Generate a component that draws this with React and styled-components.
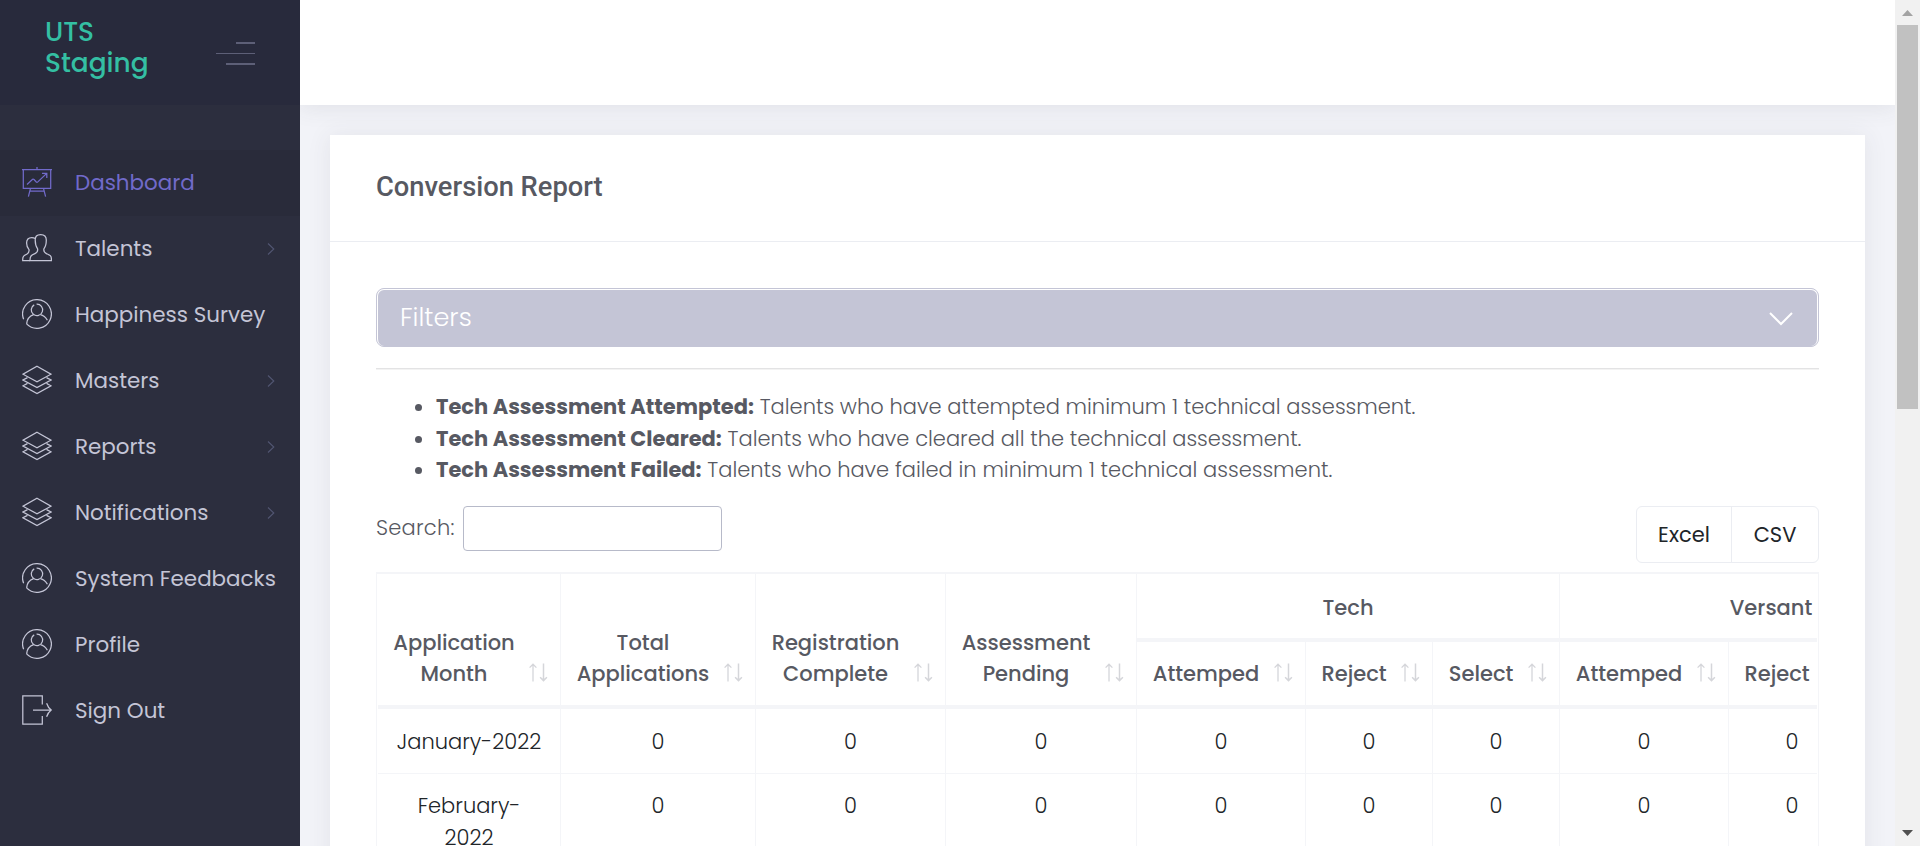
import React from "react";
import styled, { createGlobalStyle } from "styled-components";

const line = "#f4f5f8";
const lavender = "#c4c5d6";

const GlobalStyle = createGlobalStyle`
  *, *::before, *::after { box-sizing: border-box; }
  body {
    margin: 0;
    overflow: hidden;
    background: #f2f3f8;
    color: #575962;
    font: 300 21px/31.5px Poppins, Inter, sans-serif;
  }
`;

const Page = styled.div`
  display: flex;
  height: 846px;
  overflow: hidden;
`;

/* ---------- sidebar ---------- */

const Sidebar = styled.aside`
  flex: 0 0 300px;
  min-width: 0;
  position: relative;
  z-index: 2;
  background: #2c2e3e;
`;

const Brand = styled.div`
  display: flex;
  justify-content: space-between;
  align-items: flex-start;
  height: 105px;
  padding: 16px 45px 0 45px;
  background: #282a3c;
`;

const BrandName = styled.div`
  width: 110px;
  color: #34bfa3;
  font-size: 26.4px;
  font-weight: 500;
  line-height: 31px;
`;

const Burger = styled.div`
  display: flex;
  flex-direction: column;
  align-items: flex-end;
  justify-content: space-between;
  width: 39px;
  height: 23px;
  margin-top: 26px;
`;

const BurgerLine = styled.span`
  width: ${(p) => p.$w}px;
  height: ${(p) => p.$h}px;
  background: #5d5f77;
`;

const Nav = styled.nav`
  padding-top: 45px;
`;

const NavItem = styled.div`
  display: flex;
  align-items: center;
  height: 66px;
  padding: 0 25px 0 22px;
  color: ${(p) => (p.$active ? "#716aca" : lavender)};
  background: ${(p) => (p.$active ? "#292b3a" : "transparent")};
  font-size: 21.45px;
  font-weight: 400;
  white-space: nowrap;
`;

const NavIcon = styled.svg`
  flex: none;
  width: 30px;
  height: 30px;
  margin: 0 23px 2px 0;
  fill: none;
  stroke: currentColor;
  stroke-width: 1.25;
`;

const NavText = styled.span`
  flex: 1;
  min-width: 0;
`;

const NavArrow = styled.svg`
  flex: none;
  width: 8px;
  height: 14px;
  fill: none;
  stroke: #525672;
  stroke-width: 1.1;
`;

/* ---------- main column ---------- */

const Main = styled.main`
  flex: 1;
  min-width: 0;
  overflow: hidden;
`;

const TopBar = styled.header`
  height: 105px;
  background: #fff;
  box-shadow: 0 1px 22px 1px rgba(69, 65, 78, 0.1);
`;

const Card = styled.section`
  margin: 30px 30px 0;
  height: 900px;
  background: #fff;
  box-shadow: 0 1px 22px 1px rgba(69, 65, 78, 0.08);
`;

const CardHead = styled.div`
  display: flex;
  align-items: center;
  height: 107px;
  padding: 0 46px 1px;
  border-bottom: 1px solid #ebedf2;
`;

const CardTitle = styled.h3`
  margin: 0;
  font: 500 27.3px/33px Roboto, sans-serif;
`;

const CardBody = styled.div`
  padding: 46px 46px 0;
`;

const Filters = styled.div`
  height: 59px;
  border: 1px solid ${lavender};
  border-radius: 8px;
  background: ${lavender};
`;

const FiltersHead = styled.div`
  display: flex;
  align-items: center;
  justify-content: space-between;
  height: 57px;
  padding: 0 24px 0 22px;
  border: 1px solid #fff;
  border-bottom: 0;
  border-radius: 7px;
  color: #fff;
  font-size: 25.6px;
`;

const FiltersChevron = styled.svg`
  width: 24px;
  height: 14px;
  margin-top: 1px;
  fill: none;
  stroke: #fff;
  stroke-width: 2;
`;

const Divider = styled.hr`
  height: 2px;
  margin: 21px 0;
  border: 0;
  border-top: 1px solid #e3e3e4;
  background: #f3f3f3;
`;

const Notes = styled.ul`
  margin: 0 0 20.5px;
  padding-left: 60px;
`;

const NoteTerm = styled.b`
  font-weight: 700;
`;

const Toolbar = styled.div`
  display: flex;
  justify-content: space-between;
  align-items: flex-start;
  height: 66px;
`;

const SearchLabel = styled.label`
  display: flex;
  line-height: 43px;
`;

const SearchCaption = styled.span`
  width: 87px;
  letter-spacing: 0.25px;
`;

const SearchInput = styled.input`
  width: 259px;
  height: 45px;
  border: 1px solid #b7bac9;
  border-radius: 4px;
  background: #fff;
`;

const ButtonGroup = styled.div`
  display: flex;
  height: 57px;
  border: 1px solid #ebedf2;
  border-radius: 6px;
`;

const ExportButton = styled.button`
  width: ${(p) => p.$w}px;
  padding: 0 0 1px;
  border: 0;
  border-left: ${(p) => (p.$divided ? "1px solid #ebedf2" : "0")};
  background: none;
  color: #212529;
  font: 400 21px/31px Poppins, Inter, sans-serif;
`;

/* ---------- table ---------- */

const TableFrame = styled.div`
  width: 1443px;
  padding: 0 1px;
  overflow: hidden;
  border: solid ${line};
  border-width: 2px 1px 0;
`;

const TableClip = styled.div`
  overflow: hidden;
`;

const Table = styled.table`
  width: 1605px;
  table-layout: fixed;
  border-collapse: separate;
  border-spacing: 0;
  text-align: center;
`;

const HeadCell = styled.th`
  position: relative;
  height: ${(p) => p.$h}px;
  padding: ${(p) => (p.$group ? "2px 16px 0" : "0 45px 16px 15px")};
  border-right: 1px solid ${line};
  border-bottom: 4px solid ${line};
  font-weight: 500;
  line-height: 31px;
  vertical-align: ${(p) => (p.$group ? "middle" : "bottom")};
`;

const Cell = styled.td`
  height: 65px;
  padding: 16px;
  border-right: 1px solid ${line};
  border-bottom: 1px solid ${line};
  color: #212529;
  vertical-align: top;

  tr:first-child > & {
    padding: 17px 16px 15px;
  }
`;

const SortMark = styled.svg`
  position: absolute;
  right: 12px;
  bottom: 23px;
  width: 19px;
  height: 19px;
  fill: none;
  stroke: #d5d6da;
`;

/* ---------- page scrollbar ---------- */

const ScrollTrack = styled.div`
  flex: 0 0 25px;
  display: flex;
  flex-direction: column;
  align-items: center;
  position: relative;
  z-index: 1;
  padding: 10px 0;
  background: #f1f1f1;
`;

const ScrollThumb = styled.div`
  width: 21px;
  height: 384px;
  margin: 9px 0 auto;
  background: #c1c1c1;
`;

const ScrollArrow = styled.svg`
  width: 11px;
  height: 6px;
  fill: ${(p) => p.$fill};
`;

/* ---------- icons ---------- */

const icons = {
  board: (
    <>
      <path d="M0 2.6H30M1.3 2.6V21.3H28.7V2.6M15 0V2.6M8.5 21.3L6.4 29.6M21.5 21.3L23.6 29.6M8 24H22" />
      <path d="M5 17.5L10.6 12.3Q11.3 11.8 12 12.5L14.3 15Q15 15.6 15.8 14.9L24.5 6.6M20 6.4H24.8V11" />
    </>
  ),
  users: (
    <>
      <path d="M18.7 1.6C14.6 1.6 13.2 3.6 13.2 7C13.2 11.5 14.2 14 15.6 15.8C16 18.2 15.6 19.4 13 20.6C9.6 22 8 22.6 8 27V27.6H29.4V26C29.4 22.4 27.6 22 24.4 20.6C21.8 19.4 21.5 18.2 21.9 15.8C23.4 14 24.3 11.5 24.3 7C24.3 3.6 22.8 1.6 18.7 1.6Z" />
      <path d="M13 5.6C12 4.8 10.8 4.6 9.8 4.6C6 4.6 4.6 6.8 4.6 10C4.6 13.2 5.6 15 7 16.6C7.4 19 7 20 4.8 21.2C2 22.6 .7 23.2 .7 26.4V27.6H8" />
    </>
  ),
  user: (
    <>
      <path d="M1.6 20.2A14.36 14.36 0 1 1 4.6 24.9" />
      <path d="M12.2 5.9A5.7 5.7 0 1 0 14.6 5.2" />
      <path d="M11.6 15.7C8 17 5 20 4.6 24.9M18.4 15.7C21.5 16.4 23.8 18.5 25.4 21.2" />
    </>
  ),
  layers: (
    <>
      <path d="M15 1.2L29 9.2L15 16.9L1 9.2Z" />
      <path d="M5.5 12.6L1 15L15 22.5L29 15L24.5 12.6" />
      <path d="M5.5 18.4L1 20.8L15 28.5L29 20.8L24.5 18.4" />
    </>
  ),
  exit: (
    <path d="M20.3 9.5V.8H.8V29.2H20.3V21M11 15H29.2M24.6 8.2Q26 12.5 29.2 15Q26 17.5 24.6 21.8" />
  ),
};

const menu = [
  { text: "Dashboard", icon: "board", active: true },
  { text: "Talents", icon: "users", more: true },
  { text: "Happiness Survey", icon: "user" },
  { text: "Masters", icon: "layers", more: true },
  { text: "Reports", icon: "layers", more: true },
  { text: "Notifications", icon: "layers", more: true },
  { text: "System Feedbacks", icon: "user" },
  { text: "Profile", icon: "user" },
  { text: "Sign Out", icon: "exit" },
];

const notes = [
  ["Tech Assessment Attempted:", "Talents who have attempted minimum 1 technical assessment."],
  ["Tech Assessment Cleared:", "Talents who have cleared all the technical assessment."],
  ["Tech Assessment Failed:", "Talents who have failed in minimum 1 technical assessment."],
];

const columnWidths = [183, 195, 190, 191, 169, 127, 127, 169, 127, 127];
const leadColumns = ["Application Month", "Total Applications", "Registration Complete", "Assessment Pending"];
const stageColumns = ["Attemped", "Reject", "Select"];
const groups = ["Tech", "Versant"];
const months = ["January-2022", "February-2022"];

const Sort = () => (
  <SortMark viewBox="0 0 19 19">
    <path d="M4 1V18.5M.6 4.6L4 1.2L7.4 4.6" strokeWidth="1.3" />
    <path d="M14.5 .5V17M11.1 14.2L14.5 17.6L17.9 14.2" strokeWidth="1.5" />
  </SortMark>
);

export default function App() {
  return (
    <>
      <GlobalStyle />
      <Page>
        <Sidebar>
          <Brand>
            <BrandName>UTS Staging</BrandName>
            <Burger>
              <BurgerLine $w={19} $h={2} />
              <BurgerLine $w={39} $h={1} />
              <BurgerLine $w={29} $h={2} />
            </Burger>
          </Brand>
          <Nav>
            {menu.map((m) => (
              <NavItem key={m.text} $active={m.active}>
                <NavIcon viewBox="0 0 30 30">{icons[m.icon]}</NavIcon>
                <NavText>{m.text}</NavText>
                {m.more && (
                  <NavArrow viewBox="0 0 8 14">
                    <path d="M1 1.5L6.8 7L1 12.5" />
                  </NavArrow>
                )}
              </NavItem>
            ))}
          </Nav>
        </Sidebar>

        <Main>
          <TopBar />
          <Card>
            <CardHead>
              <CardTitle>Conversion Report</CardTitle>
            </CardHead>
            <CardBody>
              <Filters>
                <FiltersHead>
                  Filters
                  <FiltersChevron viewBox="0 0 24 14">
                    <path d="M1 1L12 12L23 1" />
                  </FiltersChevron>
                </FiltersHead>
              </Filters>
              <Divider />
              <Notes>
                {notes.map(([term, text]) => (
                  <li key={term}>
                    <NoteTerm>{term}</NoteTerm> {text}
                  </li>
                ))}
              </Notes>
              <Toolbar>
                <SearchLabel>
                  <SearchCaption>Search:</SearchCaption>
                  <SearchInput />
                </SearchLabel>
                <ButtonGroup>
                  <ExportButton $w={94}>Excel</ExportButton>
                  <ExportButton $w={87} $divided>
                    CSV
                  </ExportButton>
                </ButtonGroup>
              </Toolbar>
              <TableFrame>
                <TableClip>
                  <Table>
                    <colgroup>
                      {columnWidths.map((w, i) => (
                        <col key={i} width={w} />
                      ))}
                    </colgroup>
                    <thead>
                      <tr>
                        {leadColumns.map((c) => (
                          <HeadCell key={c} rowSpan={2}>
                            {c}
                            <Sort />
                          </HeadCell>
                        ))}
                        {groups.map((g) => (
                          <HeadCell key={g} colSpan={3} $group $h={68}>
                            {g}
                          </HeadCell>
                        ))}
                      </tr>
                      <tr>
                        {groups.map((g) =>
                          stageColumns.map((c) => (
                            <HeadCell key={g + c} $h={67}>
                              {c}
                              <Sort />
                            </HeadCell>
                          ))
                        )}
                      </tr>
                    </thead>
                    <tbody>
                      {months.map((m) => (
                        <tr key={m}>
                          <Cell>{m}</Cell>
                          {columnWidths.slice(1).map((_, i) => (
                            <Cell key={i}>0</Cell>
                          ))}
                        </tr>
                      ))}
                    </tbody>
                  </Table>
                </TableClip>
              </TableFrame>
            </CardBody>
          </Card>
        </Main>

        <ScrollTrack>
          <ScrollArrow viewBox="0 0 11 6" $fill="#a3a3a3">
            <path d="M0 6L5.5 0L11 6Z" />
          </ScrollArrow>
          <ScrollThumb />
          <ScrollArrow viewBox="0 0 11 6" $fill="#505050">
            <path d="M0 0L5.5 6L11 0Z" />
          </ScrollArrow>
        </ScrollTrack>
      </Page>
    </>
  );
}
